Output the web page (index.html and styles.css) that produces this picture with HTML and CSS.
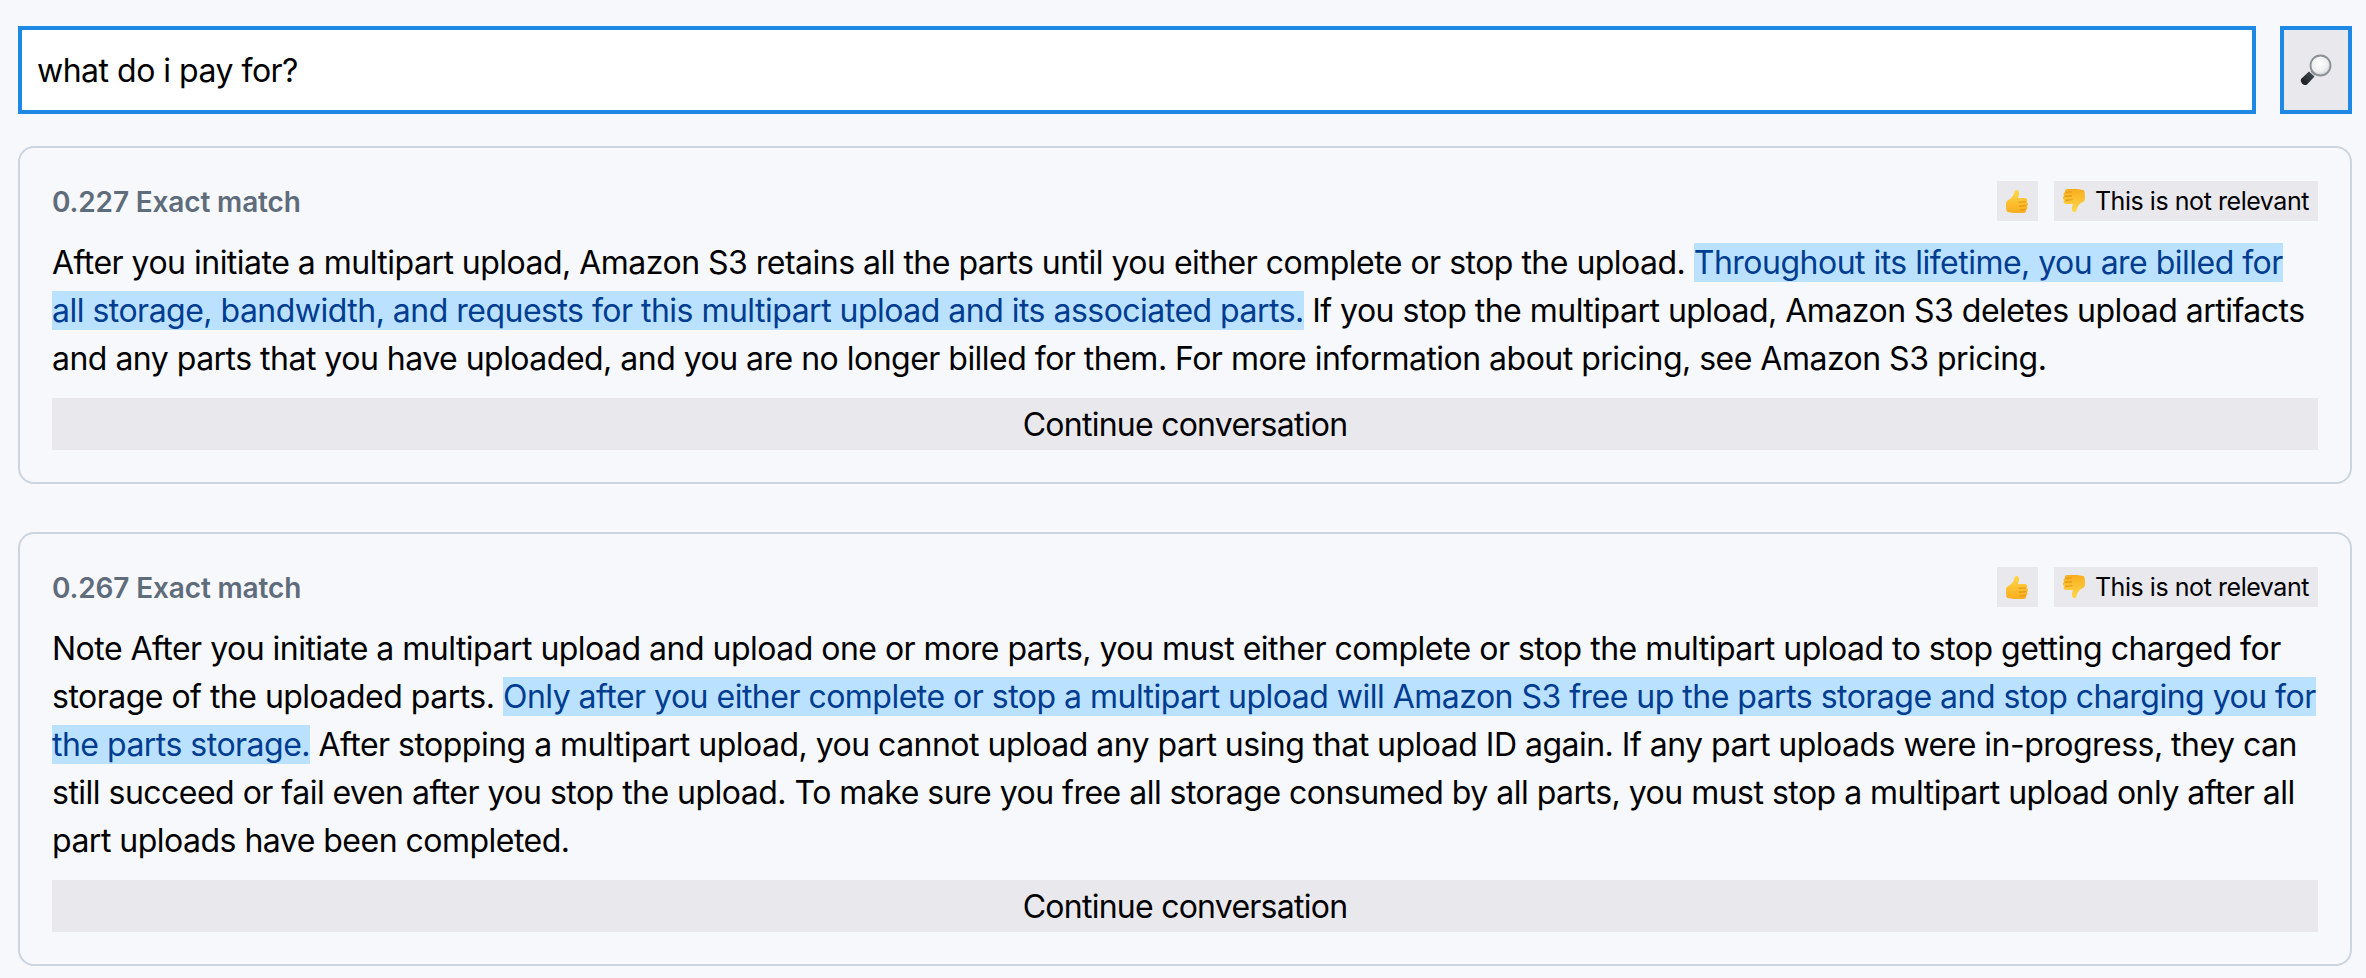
FILE: index.html
```html
<!DOCTYPE html>
<html lang="en">
<head>
<meta charset="utf-8">
<title>Search</title>
<link rel="stylesheet" href="styles.css">
</head>
<body>
<svg class="defs" width="0" height="0" aria-hidden="true">
  <defs>
    <linearGradient id="thumbfill" x1="0" y1="0" x2="0" y2="1"><stop offset="0" stop-color="#ffd84a"/><stop offset="1" stop-color="#f9ad1e"/></linearGradient>
    <radialGradient id="lens" cx="0.45" cy="0.4" r="0.6"><stop offset="0" stop-color="#ffffff"/><stop offset="0.7" stop-color="#eeeeef"/><stop offset="1" stop-color="#c6c8cb"/></radialGradient>
    <linearGradient id="handle" x1="0" y1="1" x2="1" y2="0"><stop offset="0" stop-color="#15181c"/><stop offset="1" stop-color="#4a5058"/></linearGradient>
    <symbol id="thumb" viewBox="0 0 24 24">
      <path d="M1 14C1 12 3 11 5 10C7 8.500 9 6 9.500 2.500C9.800 .5 13.500 .2 14 3C14.400 5.500 13.500 7.500 13 9L20 9C22.500 9 23 12 21.500 13C23.500 13.500 23.500 16.500 21.800 17C23 18 22.800 20.500 20.800 21C21.500 22.500 20.500 24 18.500 24L9 24C6.500 24 5 23 3 23C1.500 23 1 21 1 14z" fill="url(#thumbfill)"/>
      <path d="M13.500 13.200L21 12.800M14 17.100L21.500 16.800M14.500 21L20.500 20.800" stroke="#e0930f" stroke-width="1.100" fill="none"/>
    </symbol>
  </defs>
</svg>
<main class="page">
  <form class="search">
    <div class="search-input">what do i pay for?</div>
    <button class="search-btn" type="button" aria-label="Search">
      <svg class="lens-icon" viewBox="0 0 32 32" aria-hidden="true">
        <path d="M9 17.500 L1 25 Q0 27 2 29.500 Q4.500 32 7 30.500 L14.500 22.500z" fill="url(#handle)"/>
        <path d="M11.500 16.500 L15.500 20.500" stroke="#7b8087" stroke-width="2.500"/>
        <circle cx="20.500" cy="11.500" r="10" fill="url(#lens)" stroke="#8b9096" stroke-width="1.800"/>
      </svg>
    </button>
  </form>

  <section class="card">
    <header class="card-head">
      <span class="score">0.227 Exact match</span>
      <div class="votes">
        <button class="vote" type="button"><svg class="thumb"><use href="#thumb"/></svg></button>
        <button class="vote" type="button"><svg class="thumb down"><use href="#thumb"/></svg>This is not relevant</button>
      </div>
    </header>
    <p class="body-text">After you initiate a multipart upload, Amazon S3 retains all the parts until you either complete or stop the upload. <mark class="hl">Throughout its lifetime, you are billed for all storage, bandwidth, and requests for this multipart upload and its associated parts.</mark> If you stop the multipart upload, Amazon S3 deletes upload artifacts and any parts that you have uploaded, and you are no longer billed for them. For more information about pricing, see Amazon S3 pricing.</p>
    <button class="continue" type="button">Continue conversation</button>
  </section>

  <section class="card">
    <header class="card-head">
      <span class="score">0.267 Exact match</span>
      <div class="votes">
        <button class="vote" type="button"><svg class="thumb"><use href="#thumb"/></svg></button>
        <button class="vote" type="button"><svg class="thumb down"><use href="#thumb"/></svg>This is not relevant</button>
      </div>
    </header>
    <p class="body-text">Note After you initiate a multipart upload and upload one or more parts, you must either complete or stop the multipart upload to stop getting charged for storage of the uploaded parts. <mark class="hl">Only after you either complete or stop a multipart upload will Amazon S3 free up the parts storage and stop charging you for the parts storage.</mark> After stopping a multipart upload, you cannot upload any part using that upload ID again. If any part uploads were in-progress, they can still succeed or fail even after you stop the upload. To make sure you free all storage consumed by all parts, you must stop a multipart upload only after all part uploads have been completed.</p>
    <button class="continue" type="button">Continue conversation</button>
  </section>
</main>
</body>
</html>
```
FILE: styles.css
```css
* { box-sizing: border-box; }
html, body { margin: 0; height: 100%; }
body {
  background: #f6f8fc;
  color: #000;
  font-family: Inter, "Liberation Sans", sans-serif;
  overflow: hidden;
}
.defs { position: absolute; }
.page { padding: 26px 14px 0 18px; display: flex; flex-direction: column; gap: 48px; }
.search { display: flex; gap: 24px; height: 88px; margin-bottom: -16px; }
.search-input {
  flex: 1;
  background: #fff;
  border: 4px solid #1e88e5;
  padding: 0 15px;
  display: flex;
  align-items: center;
  font-size: 32px;
  letter-spacing: -0.5px;
}
.search-btn {
  width: 72px;
  background: #e8e8ed;
  border: 4px solid #1e88e5;
  padding: 0;
  display: flex;
  align-items: center;
  justify-content: center;
}
.lens-icon { width: 32px; height: 32px; }
.card {
  border: 2px solid #ccd4dd;
  border-radius: 16px;
  padding: 33px 32px 32px;
}
.card-head { display: flex; justify-content: space-between; align-items: center; height: 40px; margin-bottom: 18px; }
.score { font-size: 28px; font-weight: 600; color: #5f6c7b; letter-spacing: -0.15px; position: relative; top: 1px; }
.votes { display: flex; gap: 16px; }
.vote {
  height: 40px;
  background: #e8e8ed;
  border: 0;
  padding: 0 9px 0 8px;
  display: flex;
  align-items: center;
  gap: 9px;
  font: 25px Inter, "Liberation Sans", sans-serif;
  letter-spacing: -0.45px;
  color: #000;
}
.thumb { width: 24px; height: 24px; display: block; }
.thumb.down { transform: scale(-1, -1); }
.body-text { margin: 0 0 15px; font-size: 32px; line-height: 48px; letter-spacing: -0.515px; }
.hl { background: #bae1ff; color: #003c8f; }
.continue {
  display: block;
  width: 100%;
  height: 52px;
  background: #e8e8ed;
  border: 0;
  padding: 0;
  font: 32px Inter, "Liberation Sans", sans-serif;
  letter-spacing: -0.75px;
  color: #000;
}
```
